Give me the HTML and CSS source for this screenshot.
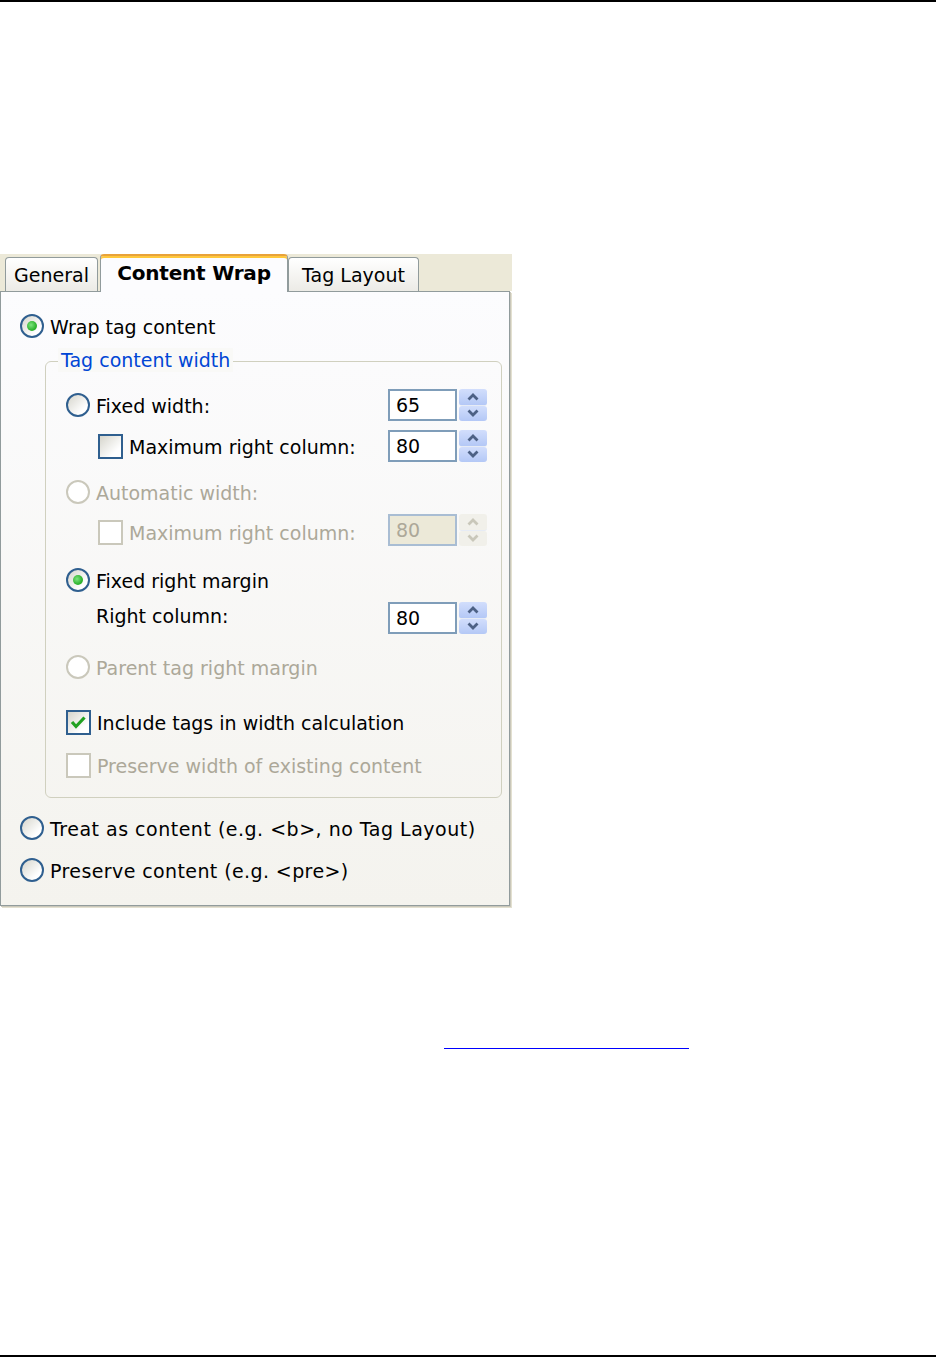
FILE: index.html
```html
<!DOCTYPE html>
<html lang="en">
<head>
    <meta charset="UTF-8">
    <title>Content Wrap</title>
    <link rel="stylesheet" href="styles.css">
</head>
<body>
    <div class="rule"></div>

    <div class="dialog">
        <div class="tabs">
            <div class="tab tab-general">General</div>
            <div class="tab tab-active">Content Wrap</div>
            <div class="tab tab-layout">Tag Layout</div>
        </div>

        <div class="panel">
            <div class="row row-top">
                <span class="radio checked"></span>
                <span class="label">Wrap tag content</span>
            </div>

            <div class="group">
                <span class="group-title">Tag content width</span>

                <div class="row g-row">
                    <span class="radio"></span>
                    <span class="label">Fixed width:</span>
                    <div class="spin">
                        <div class="spin-field">65</div>
                        <div class="spin-buttons">
                            <span class="spin-btn"><svg width="12" height="8" viewBox="0 0 12 8"><polyline points="1.5,6.5 6,2 10.5,6.5" /></svg></span>
                            <span class="spin-btn"><svg width="12" height="8" viewBox="0 0 12 8"><polyline points="1.5,1.5 6,6 10.5,1.5" /></svg></span>
                        </div>
                    </div>
                </div>

                <div class="row g-row m9 nested">
                    <span class="check"></span>
                    <span class="label">Maximum right column:</span>
                    <div class="spin">
                        <div class="spin-field">80</div>
                        <div class="spin-buttons">
                            <span class="spin-btn"><svg width="12" height="8" viewBox="0 0 12 8"><polyline points="1.5,6.5 6,2 10.5,6.5" /></svg></span>
                            <span class="spin-btn"><svg width="12" height="8" viewBox="0 0 12 8"><polyline points="1.5,1.5 6,6 10.5,1.5" /></svg></span>
                        </div>
                    </div>
                </div>

                <div class="row g-row m14 disabled">
                    <span class="radio"></span>
                    <span class="label">Automatic width:</span>
                </div>

                <div class="row g-row m6 nested disabled low">
                    <span class="check"></span>
                    <span class="label">Maximum right column:</span>
                    <div class="spin">
                        <div class="spin-field">80</div>
                        <div class="spin-buttons">
                            <span class="spin-btn"><svg width="12" height="8" viewBox="0 0 12 8"><polyline points="1.5,6.5 6,2 10.5,6.5" /></svg></span>
                            <span class="spin-btn"><svg width="12" height="8" viewBox="0 0 12 8"><polyline points="1.5,1.5 6,6 10.5,1.5" /></svg></span>
                        </div>
                    </div>
                </div>

                <div class="row g-row m18">
                    <span class="radio checked"></span>
                    <span class="label">Fixed right margin</span>
                </div>

                <div class="row g-row m6 indent high">
                    <span class="label">Right column:</span>
                    <div class="spin">
                        <div class="spin-field">80</div>
                        <div class="spin-buttons">
                            <span class="spin-btn"><svg width="12" height="8" viewBox="0 0 12 8"><polyline points="1.5,6.5 6,2 10.5,6.5" /></svg></span>
                            <span class="spin-btn"><svg width="12" height="8" viewBox="0 0 12 8"><polyline points="1.5,1.5 6,6 10.5,1.5" /></svg></span>
                        </div>
                    </div>
                </div>

                <div class="row g-row m17 disabled">
                    <span class="radio"></span>
                    <span class="label">Parent tag right margin</span>
                </div>

                <div class="row g-row m23">
                    <span class="check checked"><svg width="21" height="21" viewBox="0 0 21 21"><polyline points="4,10 8,14.5 16.5,5.5" /></svg></span>
                    <span class="label">Include tags in width calculation</span>
                </div>

                <div class="row g-row m11 disabled">
                    <span class="check"></span>
                    <span class="label">Preserve width of existing content</span>
                </div>
            </div>

            <div class="row row-bottom">
                <span class="radio"></span>
                <span class="label">Treat as content (e.g. &lt;b&gt;, no Tag Layout)</span>
            </div>

            <div class="row row-bottom second">
                <span class="radio"></span>
                <span class="label">Preserve content (e.g. &lt;pre&gt;)</span>
            </div>
        </div>
    </div>

    <div class="link-rule"></div>

    <div class="rule rule-bottom"></div>
</body>
</html>
```

FILE: styles.css
```css
body {
    margin: 0;
    background: #fff;
    font-family: "DejaVu Sans", Verdana, sans-serif;
    font-size: 19px;
    color: #000;
}

.rule {
    height: 2px;
    background: #000;
}

.rule-bottom {
    margin-top: 306px;
}

.link-rule {
    margin: 142px 0 0 444px;
    width: 245px;
    border-top: 1px solid #0000ff;
}

/* dialog */
.dialog {
    margin-top: 252px;
    width: 512px;
}

.tabs {
    display: flex;
    align-items: flex-end;
    height: 37px;
    padding-left: 5px;
    background: #ece9d8;
    position: relative;
    z-index: 1;
}

.tab {
    box-sizing: border-box;
    height: 34px;
    display: flex;
    align-items: center;
    justify-content: center;
    border: 1px solid #919b9c;
    border-bottom: none;
    border-radius: 4px 4px 0 0;
    background: linear-gradient(#ffffff, #ecebe6);
}

.tab-general {
    width: 93px;
}

.tab-active {
    width: 188px;
    height: 38px;
    margin: 0 0 -1px 2px;
    padding-bottom: 3px;
    border-top: 2px solid #e8a23a;
    box-shadow: inset 0 2px 0 #ffc83c;
    background: #fcfcfe;
    font-weight: bold;
    font-size: 20px;
    letter-spacing: -0.2px;
}

.tab-layout {
    width: 131px;
}

.panel {
    box-sizing: border-box;
    width: 510px;
    height: 615px;
    padding: 21px 7px 0 19px;
    border: 1px solid #919b9c;
    background: linear-gradient(#fcfcfe, #f4f3ee);
    box-shadow: 1px 1px 0 #c9c7ba, 2px 2px 0 #e3e0d0;
}

.row {
    display: flex;
    align-items: center;
    gap: 6px;
}

.row-top {
    height: 26px;
}

.row-bottom {
    height: 26px;
    margin-top: 17px;
    letter-spacing: 0.5px;
}

.row-bottom.second {
    margin-top: 16px;
    letter-spacing: 0.4px;
}

.label {
    padding-top: 1px;
    white-space: nowrap;
}

/* group box */
.group {
    position: relative;
    margin: 22px 0 0 25px;
    padding: 27px 14px 16px 20px;
    border: 1px solid #d0d0bf;
    border-radius: 6px;
}

.group-title {
    position: absolute;
    top: -14px;
    left: 12px;
    padding: 0 3px;
    line-height: 24px;
    color: #0046d5;
    background: #f9f9f7;
}

.g-row {
    height: 32px;
}

.m6 { margin-top: 6px; }
.m9 { margin-top: 9px; }
.m11 { margin-top: 11px; }
.m14 { margin-top: 14px; }
.m17 { margin-top: 17px; }
.m18 { margin-top: 18px; }
.m23 { margin-top: 23px; }

.nested {
    padding-left: 32px;
}

.indent {
    padding-left: 30px;
}

.low .check,
.low .label {
    margin-top: 5px;
}

.high .label {
    margin-bottom: 6px;
}

/* radio + checkbox */
.radio {
    box-sizing: border-box;
    flex: none;
    width: 24px;
    height: 24px;
    border: 2px solid #2f5f8f;
    border-radius: 50%;
    background: linear-gradient(135deg, #d6d5cc, #ffffff 75%);
    display: flex;
    align-items: center;
    justify-content: center;
}

.radio.checked::after {
    content: "";
    width: 10px;
    height: 10px;
    border-radius: 50%;
    background: radial-gradient(circle at 40% 40%, #7de47d, #2ab02a 65%, #9ad89a);
}

.check {
    box-sizing: border-box;
    flex: none;
    width: 25px;
    height: 25px;
    border: 2px solid #2f5f8f;
    background: linear-gradient(135deg, #d6d5cc, #ffffff 75%);
    display: flex;
    align-items: center;
    justify-content: center;
}

.check svg polyline {
    fill: none;
    stroke: #21a121;
    stroke-width: 3.2;
}

.disabled {
    color: #aca899;
}

.disabled .radio,
.disabled .check {
    border-color: #cac8bb;
    background: #fff;
}

/* spin boxes */
.spin {
    display: flex;
    margin-left: auto;
    gap: 2px;
}

.spin-field {
    box-sizing: border-box;
    width: 69px;
    height: 32px;
    padding: 3px 0 0 6px;
    border: 2px solid #7f9db9;
    background: #fff;
    color: #000;
}

.spin-buttons {
    display: flex;
    flex-direction: column;
    width: 28px;
    height: 32px;
}

.spin-btn {
    flex: 1;
    display: flex;
    align-items: center;
    justify-content: center;
    border-radius: 3px;
    background: linear-gradient(#d2defc, #b4c8f6);
    border-bottom: 1px solid #e6ebf5;
}

.spin-btn + .spin-btn {
    border-bottom: none;
}

.spin-btn polyline {
    fill: none;
    stroke: #4d6185;
    stroke-width: 2.8;
}

.disabled .spin-field {
    border-color: #a9bdd3;
    background: #ece9d8;
    color: #aca899;
}

.disabled .spin-btn {
    background: #f1f0ea;
}

.disabled .spin-btn polyline {
    stroke: #c9c7ba;
}
```
